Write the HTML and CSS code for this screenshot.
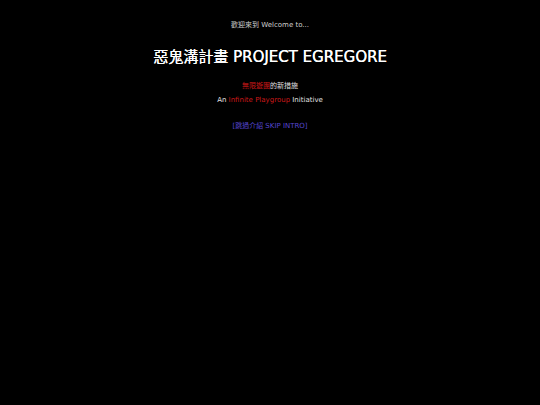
FILE: index.html
```html
<!DOCTYPE html>
<html>
<head>
<meta charset="utf-8">
<link rel="stylesheet" href="styles.css">
</head>
<body>
<main class="intro">
  <p class="welcome">歡迎來到 Welcome to...</p>
  <h1 class="title">惡鬼溝計畫 PROJECT EGREGORE</h1>
  <p class="line zh"><span class="red">無限遊團</span>的新措施</p>
  <p class="line">An <span class="red">Infinite Playgroup</span> Initiative</p>
  <p class="skip">[跳過介紹 SKIP INTRO]</p>
</main>
</body>
</html>
```
FILE: styles.css
```css
html, body {
  margin: 0;
  padding: 0;
  background: #000;
  width: 540px;
  height: 405px;
}
.intro {
  display: flex;
  flex-direction: column;
  align-items: center;
  font-family: "DejaVu Sans", Verdana, "Noto Sans CJK TC", sans-serif;
  color: #e6e6e6;
  padding-top: 20px;
}
.welcome {
  margin: 0;
  font-size: 7px;
  line-height: 10px;
  color: #cfcfcf;
}
.title {
  margin: 17px 0 0;
  font-size: 15px;
  line-height: 20px;
  font-weight: normal;
  color: #fff;
  text-shadow: 0.3px 0 0 #fff;
}
.line {
  margin: 0;
  font-size: 7px;
  line-height: 10px;
  color: #e0e0e0;
}
.zh {
  margin-top: 14px;
  margin-bottom: 4px;
}
.red {
  color: #cc1818;
}
.skip {
  margin: 16px 0 0;
  font-size: 7px;
  line-height: 10px;
  color: #5646d0;
}
```
